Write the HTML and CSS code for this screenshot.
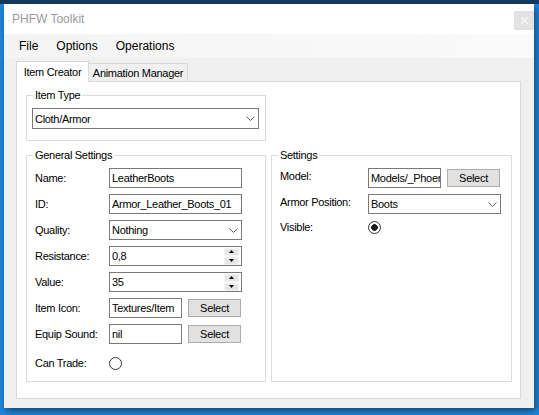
FILE: index.html
```html
<!DOCTYPE html>
<html>
	<head>
		<meta charset="utf-8">
		<title>PHFW Toolkit</title>
		<link rel="stylesheet" href="styles.css">
	</head>
	<body>
		<div class="topbar"></div>
		<div class="window">
			<div class="titlebar">
				<span class="title">PHFW Toolkit</span>
				<div class="close">
					<svg width="7" height="7" viewBox="0 0 7 7"><path d="M0.5 0.5L6.5 6.5M6.5 0.5L0.5 6.5" stroke="#f7f7f7" stroke-width="1.4"/></svg>
				</div>
			</div>
			<div class="menubar">
				<span class="menuItem">File</span>
				<span class="menuItem">Options</span>
				<span class="menuItem">Operations</span>
			</div>
			<div class="client">
				<div class="tabs">
					<div class="tab tabActive">Item Creator</div>
					<div class="tab">Animation Manager</div>
				</div>
				<div class="tabPage">

					<fieldset class="group groupType">
						<legend>Item Type</legend>
						<div class="groupBody">
							<div class="combo comboWide">
								<span>Cloth/Armor</span>
								<svg class="chevron" width="9" height="5" viewBox="0 0 9 5"><polyline points="0.5,0.5 4.5,4.5 8.5,0.5" fill="none" stroke="#606060"/></svg>
							</div>
						</div>
					</fieldset>

					<fieldset class="group groupGeneral">
						<legend>General Settings</legend>
						<div class="rows">
							<div class="row">
								<span class="label">Name:</span>
								<div class="field">LeatherBoots</div>
							</div>
							<div class="row">
								<span class="label">ID:</span>
								<div class="field">Armor_Leather_Boots_01</div>
							</div>
							<div class="row">
								<span class="label">Quality:</span>
								<div class="combo">
									<span>Nothing</span>
									<svg class="chevron" width="9" height="5" viewBox="0 0 9 5"><polyline points="0.5,0.5 4.5,4.5 8.5,0.5" fill="none" stroke="#606060"/></svg>
								</div>
							</div>
							<div class="row">
								<span class="label">Resistance:</span>
								<div class="field">
									<span>0,8</span>
									<div class="spin">
										<div class="spinButton"><svg width="5" height="3" viewBox="0 0 5 3"><polygon points="2.5,0 5,3 0,3" fill="#000"/></svg></div>
										<div class="spinButton"><svg width="5" height="3" viewBox="0 0 5 3"><polygon points="0,0 5,0 2.5,3" fill="#000"/></svg></div>
									</div>
								</div>
							</div>
							<div class="row">
								<span class="label">Value:</span>
								<div class="field">
									<span>35</span>
									<div class="spin">
										<div class="spinButton"><svg width="5" height="3" viewBox="0 0 5 3"><polygon points="2.5,0 5,3 0,3" fill="#000"/></svg></div>
										<div class="spinButton"><svg width="5" height="3" viewBox="0 0 5 3"><polygon points="0,0 5,0 2.5,3" fill="#000"/></svg></div>
									</div>
								</div>
							</div>
							<div class="row">
								<span class="label">Item Icon:</span>
								<div class="field fieldShort">Textures/Item</div>
								<div class="button">Select</div>
							</div>
							<div class="row">
								<span class="label">Equip Sound:</span>
								<div class="field fieldShort">nil</div>
								<div class="button">Select</div>
							</div>
							<div class="row rowRadio">
								<span class="label">Can Trade:</span>
								<div class="radio"></div>
							</div>
						</div>
					</fieldset>

					<fieldset class="group groupSettings">
						<legend>Settings</legend>
						<div class="rows">
							<div class="row">
								<span class="label">Model:</span>
								<div class="field fieldShort">Models/_Phoenix</div>
								<div class="button">Select</div>
							</div>
							<div class="row">
								<span class="label">Armor Position:</span>
								<div class="combo">
									<span>Boots</span>
									<svg class="chevron" width="9" height="5" viewBox="0 0 9 5"><polyline points="0.5,0.5 4.5,4.5 8.5,0.5" fill="none" stroke="#606060"/></svg>
								</div>
							</div>
							<div class="row rowVisible">
								<span class="label">Visible:</span>
								<div class="radio radioOn"></div>
							</div>
						</div>
					</fieldset>

				</div>
			</div>
		</div>
	</body>
</html>
```

FILE: styles.css
```css
html, body{
	margin:0px;
	padding:0px;
}
body{
	width:539px;
	height:415px;
	overflow:hidden;
	background-color:#1f86dc;
	font-family:"Liberation Sans", Arial, sans-serif;
	color:#000;
}
.topbar{
	height:4px;
	background-color:#173a62;
}
.window{
	width:530px;
	height:404px;
	margin-left:4px;
	display:flex;
	flex-direction:column;
	box-shadow:2px 3px 7px rgba(0,0,0,.45);
}

/* title + menu */
.titlebar{
	height:30px;
	flex:none;
	background-color:#fff;
	display:flex;
	align-items:center;
	padding-left:8px;
}
.title{
	font-size:12px;
	color:#9a9a9a;
}
.close{
	margin-left:auto;
	align-self:flex-start;
	margin-top:7px;
	width:20px;
	height:19px;
	background-color:#e3e3e3;
	display:flex;
	align-items:center;
	justify-content:center;
}
.menubar{
	height:24px;
	flex:none;
	background:linear-gradient(to right, #f4f4f4, #fafafa);
	display:flex;
	align-items:center;
	padding-left:6px;
}
.menuItem{
	font-size:12px;
	padding:0px 9px;
}

/* form area */
.client{
	flex:1;
	background-color:#f0f0f0;
	padding:3px 13px 9px 12px;
	display:flex;
	flex-direction:column;
	font-size:11px;
	letter-spacing:-0.3px;
}
.tabs{
	height:20px;
	flex:none;
	display:flex;
	align-items:flex-end;
}
.tab{
	box-sizing:border-box;
	height:18px;
	width:99px;
	border:solid 1px #d9d9d9;
	border-left:none;
	border-bottom:none;
	background-color:#f0f0f0;
	display:flex;
	align-items:center;
	justify-content:center;
}
.tabActive{
	height:21px;
	width:73px;
	border-left:solid 1px #d9d9d9;
	background-color:#fff;
	margin-bottom:-1px;
	position:relative;
	z-index:1;
}
.tabPage{
	flex:1;
	background-color:#fff;
	border:solid 1px #d9d9d9;
	padding:7px 8px 16px 9px;
	display:grid;
	grid-template-columns:240px 241px;
	grid-template-rows:auto 1fr;
	column-gap:5px;
	row-gap:8px;
}

/* group boxes */
.group{
	margin:0px;
	padding:0px;
	min-width:0px;
	border:solid 1px #dcdcdc;
}
.group legend{
	margin-left:6px;
	padding:0px 2px;
	line-height:13px;
}
.groupType{
	grid-column:1;
	grid-row:1;
}
.groupGeneral{
	grid-column:1;
	grid-row:2;
}
.groupSettings{
	grid-column:2;
	grid-row:2;
}
.groupBody{
	padding:6px 6px 11px 5px;
}
.rows{
	display:flex;
	flex-direction:column;
	gap:6px;
	padding:6px 0px 0px 8px;
}
.row{
	height:20px;
	display:flex;
	align-items:center;
}
.label{
	width:74px;
	flex:none;
	line-height:13px;
	white-space:nowrap;
}
.groupSettings .label{
	width:88px;
	align-self:flex-start;
	margin-top:2px;
}
.rowRadio{
	margin-top:3px;
}
.rowVisible{
	height:13px;
	margin-top:1px;
}
.groupSettings .rowVisible .label{
	align-self:center;
	margin-top:0px;
}

/* controls */
.field, .combo{
	box-sizing:border-box;
	width:133px;
	height:20px;
	border:solid 1px #7a7a7a;
	background-color:#fff;
	padding-left:2px;
	display:flex;
	align-items:center;
	overflow:hidden;
	white-space:nowrap;
}
.fieldShort{
	width:73px;
}
.comboWide{
	width:227px;
	height:21px;
}
.chevron{
	margin-left:auto;
	margin-right:3px;
}
.spin{
	margin-left:auto;
	margin-right:2px;
	width:15px;
	height:17px;
	display:flex;
	flex-direction:column;
	gap:1px;
}
.spinButton{
	flex:1;
	background-color:#e6e6e6;
	border:solid 1px #f4f4f4;
	display:flex;
	align-items:center;
	justify-content:center;
}
.button{
	box-sizing:border-box;
	width:53px;
	height:18px;
	margin-left:6px;
	background-color:#e1e1e1;
	border:solid 1px #adadad;
	display:flex;
	align-items:center;
	justify-content:center;
}
.radio{
	box-sizing:border-box;
	width:13px;
	height:13px;
	border-radius:50%;
	border:solid 1px #333;
	background-color:#fff;
}
.radioOn{
	background:radial-gradient(circle, #1a1a1a 3px, #fff 3.6px);
}
```
